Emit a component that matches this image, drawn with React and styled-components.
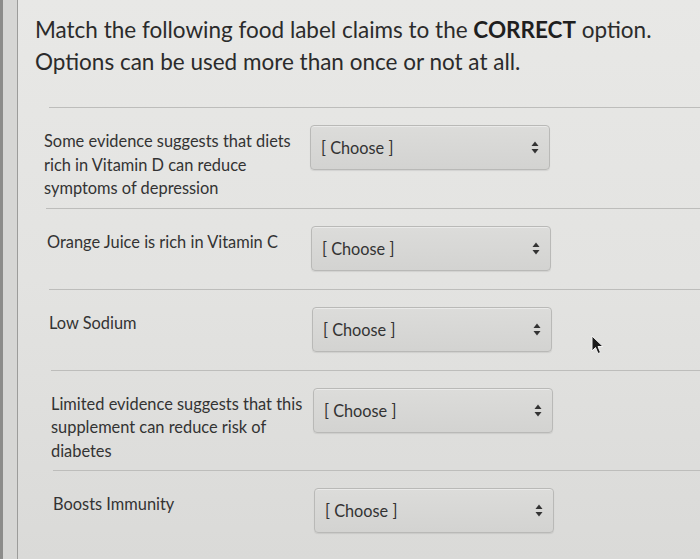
import React from 'react';
import styled, { createGlobalStyle } from 'styled-components';

const GlobalStyle = createGlobalStyle`
  html, body {
    margin: 0;
    padding: 0;
    background: #dcdcda;
  }
  body {
    font-family: Lato, "Open Sans", sans-serif;
  }
`;

const Screen = styled.div`
  position: relative;
  display: flex;
  width: 700px;
  height: 559px;
  overflow: hidden;
  background: linear-gradient(180deg, #e8e8e6 0%, #e3e3e1 50%, #dadad8 100%);
`;

const Gutter = styled.div`
  width: 18px;
  flex: none;
  border-left: 3px solid #8c8c8a;
  border-right: 1px solid #9c9c9a;
  background: #d6d6d4;
  box-sizing: border-box;
`;

const Content = styled.div`
  flex: 1;
  padding: 14px 0 0 17px;
`;

const Title = styled.p`
  margin: 0 0 29px;
  font-size: 22.5px;
  line-height: 32px;
  color: #2b2b2b;
  white-space: nowrap;

  strong {
    font-weight: 700;
    color: #1f1f1f;
  }
`;

const Divider = styled.div`
  height: 1px;
  margin-left: ${p => p.$inset || 14}px;
  background: #bdbdbb;
`;

const Row = styled.div`
  display: grid;
  grid-template-columns: 254px 240px;
  column-gap: ${p => p.$gap}px;
  align-items: start;
  padding: 17px 0 8px ${p => p.$indent}px;
`;

const Label = styled.div`
  margin-top: 4px;
  font-size: 16.4px;
  line-height: 23.5px;
  color: #333;
`;

const Select = styled.div`
  display: flex;
  align-items: center;
  justify-content: space-between;
  height: 45px;
  margin-bottom: 10px;
  padding: 0 10px 0 10px;
  box-sizing: border-box;
  border: 1px solid #b9b9b7;
  border-radius: 4px;
  background: linear-gradient(180deg, #dcdcda 0%, #d3d3d1 100%);
  box-shadow: inset 0 1px 0 rgba(255, 255, 255, 0.4), 0 1px 1px rgba(0, 0, 0, 0.08);
  font-size: 16.3px;
  color: #333;
`;

const Cursor = styled.svg`
  position: absolute;
  left: 591px;
  top: 335px;
`;

const Arrows = () => (
  <svg width="8" height="13" viewBox="0 0 8 13">
    <path d="M4 0.5 L7.5 5 H0.5 Z" fill="#333" />
    <path d="M4 12.5 L7.5 8 H0.5 Z" fill="#333" />
  </svg>
);

const rows = [
  { text: 'Some evidence suggests that diets rich in Vitamin D can reduce symptoms of depression', indent: 9 },
  { text: 'Orange Juice is rich in Vitamin C', indent: 12 },
  { text: 'Low Sodium', indent: 14 },
  { text: 'Limited evidence suggests that this supplement can reduce risk of diabetes', indent: 16 },
  { text: 'Boosts Immunity', indent: 18 },
];

export default function App() {
  return (
    <>
      <GlobalStyle />
      <Screen>
        <Gutter />
        <Content>
          <Title>
            Match the following food label claims to the <strong>CORRECT</strong> option.
            <br />
            Options can be used more than once or not at all.
          </Title>
          <Divider $inset={0} />
          {rows.map((r, i) => (
            <React.Fragment key={i}>
              <Row $indent={r.indent} $gap={12 - Math.round((r.indent - 9) * 0.5)}>
                <Label>{r.text}</Label>
                <Select>
                  <span>[ Choose ]</span>
                  <Arrows />
                </Select>
              </Row>
              {i < rows.length - 1 && <Divider $inset={r.indent + 2} />}
            </React.Fragment>
          ))}
        </Content>
        <Cursor width="14" height="20" viewBox="0 0 14 20">
          <path d="M1 1 L1 16 L4.5 12.5 L7 18.5 L9.5 17.5 L7 11.5 L12 11.5 Z" fill="#1a1a1a" stroke="#f2f2f2" strokeWidth="1" />
        </Cursor>
      </Screen>
    </>
  );
}
